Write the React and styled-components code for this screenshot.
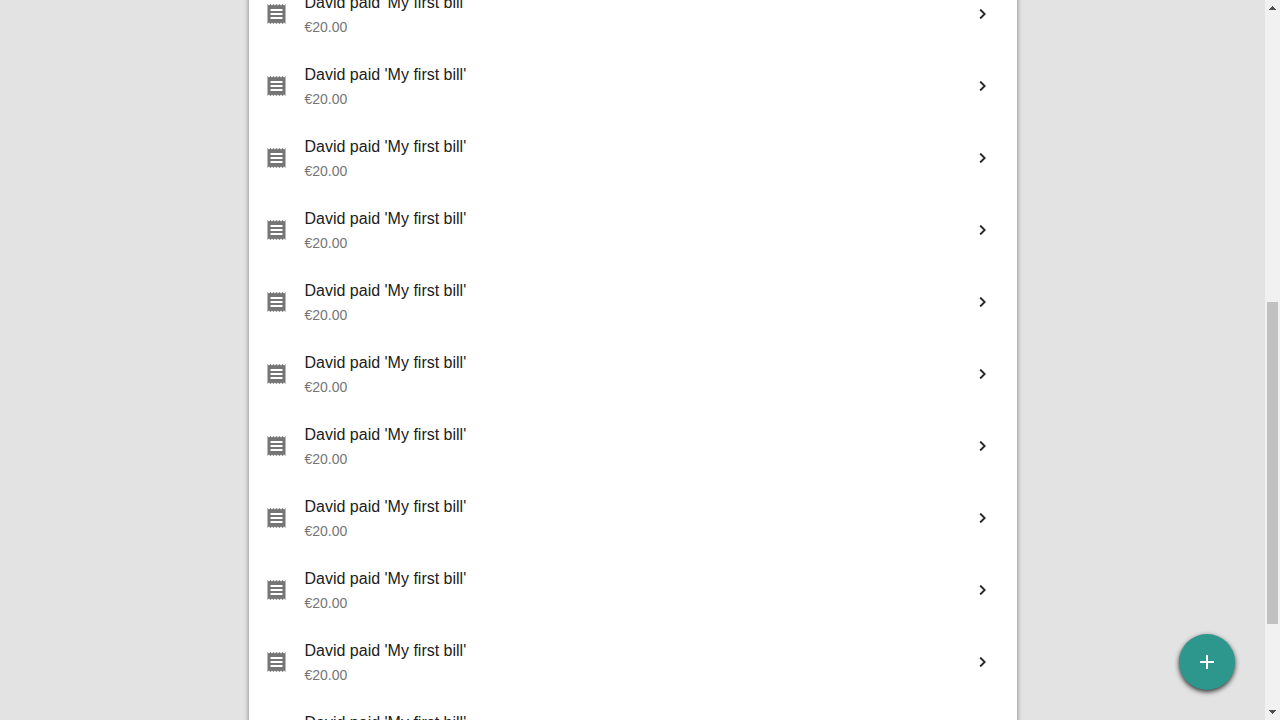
import React from "react";
import styled, { createGlobalStyle } from "styled-components";

const GlobalStyle = createGlobalStyle`
  * { box-sizing: border-box; }
  body {
    margin: 0;
    background: #e3e3e3;
    color: #212121;
    font-family: "Liberation Sans", Arial, sans-serif;
  }
`;

const Screen = styled.div`
  display: flex;
  height: 100vh;
  overflow: hidden;
`;

const Content = styled.main`
  position: relative;
  flex: 1;
  min-width: 0;
  overflow: hidden;
`;

const BillList = styled.ul`
  list-style: none;
  max-width: 768px;
  margin: -22px auto 0;
  padding: 0;
  background: #fff;
  box-shadow: 0 2px 5px rgba(0, 0, 0, 0.45);
`;

const BillLink = styled.a`
  display: flex;
  align-items: center;
  height: 72px;
  padding: 0 24px 0 16px;
  color: inherit;
  text-decoration: none;
`;

const Icon = styled.svg`
  flex: none;
  display: block;
  width: ${(p) => p.$size}px;
  height: ${(p) => p.$size}px;
  fill: ${(p) => p.$color};
`;

const BillText = styled.div`
  flex: 1;
  padding: 2px 0 0 16px;
`;

const Title = styled.div`
  font-size: 16px;
  line-height: 24px;
`;

const Amount = styled.div`
  font-size: 14px;
  line-height: 24px;
  color: #757575;
`;

const AddButton = styled.button`
  position: absolute;
  right: 30px;
  bottom: 30px;
  display: flex;
  align-items: center;
  justify-content: center;
  width: 56px;
  height: 56px;
  padding: 0;
  border: 0;
  border-radius: 50%;
  background: #2e978d;
  box-shadow: 0 2px 5px rgba(0, 0, 0, 0.8);
  cursor: pointer;
`;

const ScrollTrack = styled.div`
  display: grid;
  grid-template-rows: 17px 285fr 322fr 79fr 17px;
  flex: none;
  width: 15px;
  background: #f1f1f1;
`;

const ScrollArrow = styled.svg`
  display: block;
  width: 15px;
  height: 17px;
  fill: #505050;
`;

const ScrollThumb = styled.div`
  grid-row: 3;
  margin: 0 2px;
  background: #c1c1c1;
`;

const EndArrow = styled(ScrollArrow)`
  grid-row: 5;
`;

const bills = Array.from({ length: 11 }, (_, id) => ({
  id,
  title: "David paid 'My first bill'",
  amount: "€20.00",
}));

function Bill({ title, amount }) {
  return (
    <li>
      <BillLink href="#bill">
        <Icon viewBox="0.5 0 24 24" $size={24} $color="#757575" aria-hidden="true">
          <path d="M18 17H6v-2h12v2zm0-4H6v-2h12v2zm0-4H6V7h12v2zM3 22l1.5-1.5L6 22l1.5-1.5L9 22l1.5-1.5L12 22l1.5-1.5L15 22l1.5-1.5L18 22l1.5-1.5L21 22V2l-1.5 1.5L18 2l-1.5 1.5L15 2l-1.5 1.5L12 2l-1.5 1.5L9 2 7.5 3.5 6 2 4.5 3.5 3 2v20z" />
        </Icon>
        <BillText>
          <Title>{title}</Title>
          <Amount>{amount}</Amount>
        </BillText>
        <Icon viewBox="0.6 0 24 24" $size={20} $color="#212121" aria-hidden="true">
          <path d="M10 6L8.59 7.41 13.17 12l-4.58 4.59L10 18l6-6z" stroke="#212121" strokeWidth="0.3" />
        </Icon>
      </BillLink>
    </li>
  );
}

export default function App() {
  return (
    <>
      <GlobalStyle />
      <Screen>
        <Content>
          <BillList>
            {bills.map((bill) => (
              <Bill key={bill.id} title={bill.title} amount={bill.amount} />
            ))}
          </BillList>
          <AddButton type="button" aria-label="Add bill">
            <Icon viewBox="0 0 24 24" $size={24} $color="#fff" aria-hidden="true">
              <path d="M19 13h-6v6h-2v-6H5v-2h6V5h2v6h6v2z" />
            </Icon>
          </AddButton>
        </Content>
        <ScrollTrack aria-hidden="true">
          <ScrollArrow viewBox="0 0 15 17" shapeRendering="crispEdges">
            <path d="M7 6h1v1h1v1h1v1h1v1H4V9h1V8h1V7h1z" />
          </ScrollArrow>
          <ScrollThumb />
          <EndArrow viewBox="0 0 15 17" shapeRendering="crispEdges">
            <path d="M4 7h7v1h-1v1H9v1H8v1H7v-1H6V9H5V8H4z" />
          </EndArrow>
        </ScrollTrack>
      </Screen>
    </>
  );
}
